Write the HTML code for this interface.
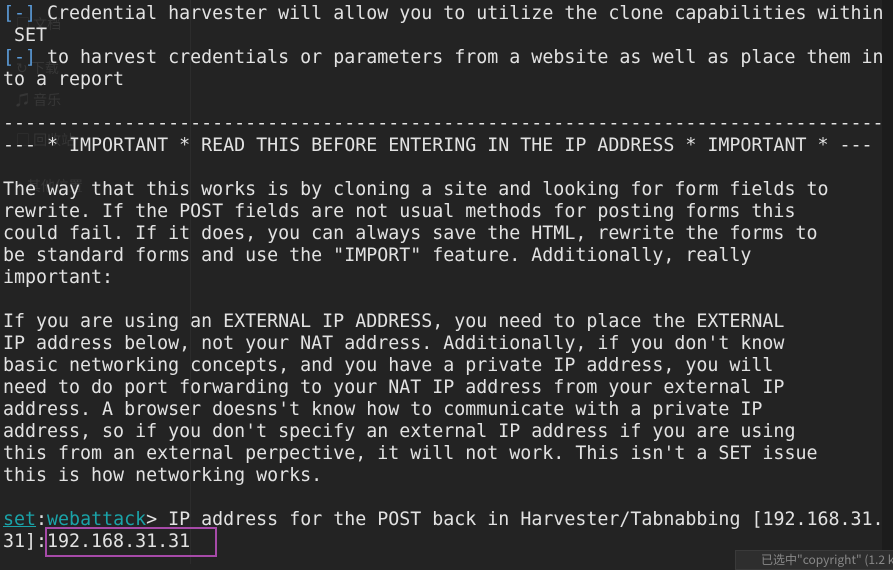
<!DOCTYPE html>
<html><head><meta charset="utf-8"><style>
html,body{margin:0;padding:0;}
body{width:893px;height:564px;background:#232323;overflow:hidden;position:relative;}
.vl{position:absolute;left:190px;top:0;width:1px;height:564px;background:#2c2c2c;}
.rl{position:absolute;left:882px;top:0;width:11px;height:564px;background:#1c1c1c;}
.ghost{position:absolute;left:16px;font:14px "Noto Sans CJK SC",sans-serif;color:#363636;white-space:nowrap;}
pre{position:absolute;left:3px;top:3px;margin:0;font-family:"DejaVu Sans Mono","Liberation Mono",monospace;font-size:18.3px;line-height:22px;color:#e2e2e2;}
.b{color:#5b9bd8;}
.s{color:#1aa3a8;text-decoration:underline;}
.t{color:#1aa3a8;}
.box{position:absolute;left:45px;top:527px;width:172px;height:30px;border:2px solid #a64aa8;box-sizing:border-box;}
.pop{position:absolute;left:735px;top:550px;width:170px;height:20px;background:#2e2e2e;border:1px solid #3a3a3a;font:12px "Noto Sans CJK SC",sans-serif;color:#888;padding-left:25px;box-sizing:border-box;white-space:nowrap;overflow:hidden;}
</style></head><body>
<div class="vl"></div><div class="rl"></div>
<div class="ghost" style="top:14px">&#9633; 文档</div>
<div class="ghost" style="top:58px">&#8635; 下载</div>
<div class="ghost" style="top:90px">&#9835; 音乐</div>
<div class="ghost" style="top:130px">&#9633; 回收站</div>
<div class="ghost" style="top:176px">+ 其他位置</div>
<pre><span class="b">[-]</span> Credential harvester will allow you to utilize the clone capabilities within
 SET
<span class="b">[-]</span> to harvest credentials or parameters from a website as well as place them in
to a report

--------------------------------------------------------------------------------
--- * IMPORTANT * READ THIS BEFORE ENTERING IN THE IP ADDRESS * IMPORTANT * ---

The way that this works is by cloning a site and looking for form fields to
rewrite. If the POST fields are not usual methods for posting forms this
could fail. If it does, you can always save the HTML, rewrite the forms to
be standard forms and use the "IMPORT" feature. Additionally, really
important:

If you are using an EXTERNAL IP ADDRESS, you need to place the EXTERNAL
IP address below, not your NAT address. Additionally, if you don't know
basic networking concepts, and you have a private IP address, you will
need to do port forwarding to your NAT IP address from your external IP
address. A browser doesns't know how to communicate with a private IP
address, so if you don't specify an external IP address if you are using
this from an external perpective, it will not work. This isn't a SET issue
this is how networking works.

<span class="s">set</span>:<span class="t">webattack</span>&gt; IP address for the POST back in Harvester/Tabnabbing [192.168.31.
31]:192.168.31.31</pre>
<div class="box"></div>
<div class="pop">已选中"copyright" (1.2 kB)</div>
</body></html>
